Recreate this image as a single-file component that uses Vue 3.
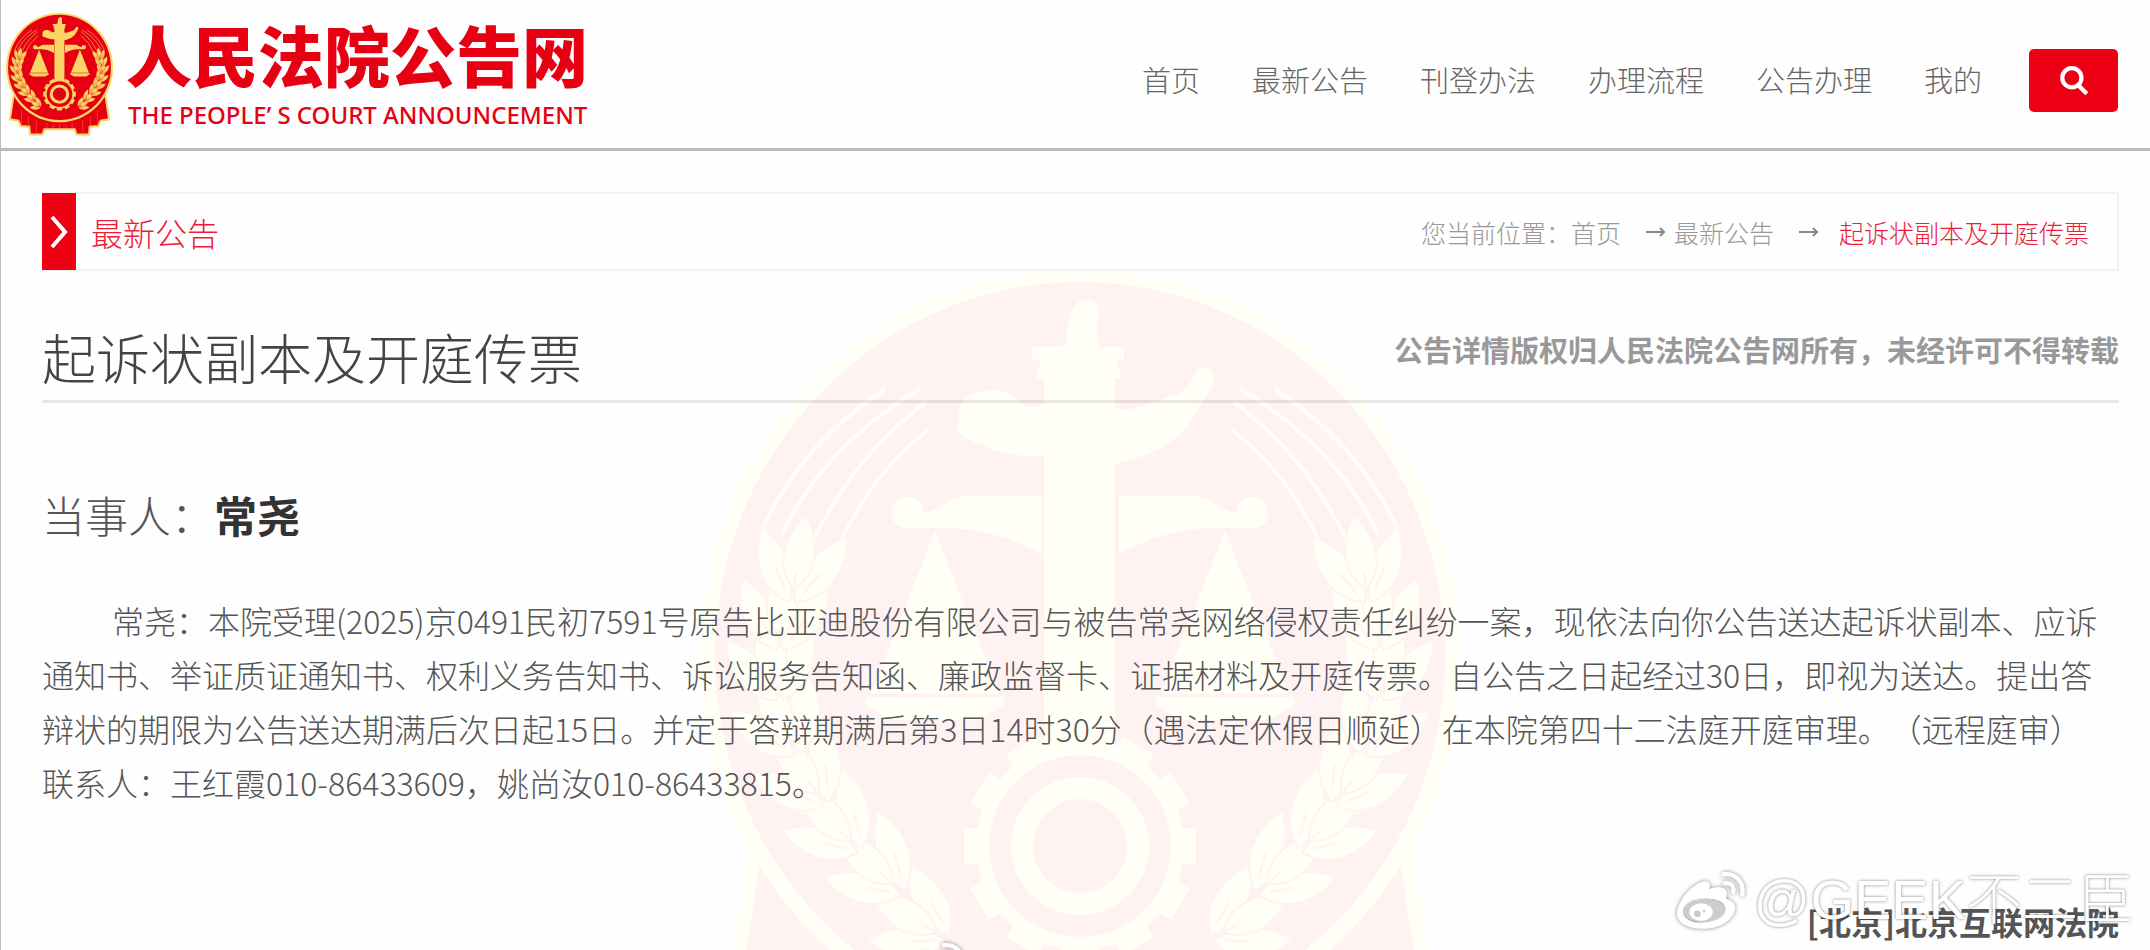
<script setup>
const navItems = ['首页', '最新公告', '刊登办法', '办理流程', '公告办理', '我的']

const teeth = Array.from({ length: 12 }, (_, i) => i * 30)

const rays = [
  'M62 260 Q100 175 185 119',
  'M82 264 Q125 175 220 119',
  'M112 274 Q150 190 226 132',
  'M138 278 Q170 205 228 160'
]

/* stem nodes of the wheat ear: x, y, direction of growth in degrees */
const nodes = [
  [248, 668, -62],
  [203, 622, -50],
  [160, 580, -46],
  [126, 534, -38],
  [98, 484, -28],
  [80, 430, -12],
  [80, 380, 2],
  [92, 332, 8]
]
</script>

<template>
  <div class="page" lang="zh-CN">
    <svg class="defs" aria-hidden="true">
      <symbol id="emblem" viewBox="0 0 760 873">
        <path class="red edge" d="M53 590 L28 755 L88 765 L104 802 L166 807 L170 862 L260 862 L272 826 L488 826 L500 862 L590 862 L594 807 L656 802 L672 765 L732 755 L707 590 Z" />
        <path class="fold" d="M110 690 V790 M160 730 V800 M215 760 V850 M290 780 V820 M335 790 V822 M380 790 V822 M425 790 V822 M470 780 V820 M545 760 V850 M600 730 V800 M650 690 V790" />
        <ellipse class="gold" cx="380" cy="388" rx="380" ry="388" />
        <ellipse class="red" cx="380" cy="386" rx="365" ry="374" />
        <g v-for="side in 2" :key="side" :transform="side === 2 ? 'translate(760 0) scale(-1 1)' : undefined">
          <path v-for="d in rays" :key="d" class="ray" :d="d" />
          <g v-for="(n, i) in nodes" :key="i" :transform="`translate(${n[0]} ${n[1]}) rotate(${n[2]})`">
            <path class="leaf" d="M-3 0 C-36 -8 -46 -42 -40 -70 C-14 -56 2 -30 -3 0 Z" />
            <path class="leaf" d="M3 0 C38 -8 50 -42 46 -72 C18 -58 -4 -32 3 0 Z" />
            <path class="leaf" d="M0 -12 C-22 -34 -18 -62 2 -88 C20 -62 22 -34 0 -12 Z" />
            <path class="vein" d="M0 -2 V-30 M-8 -10 L-20 -30 M10 -10 L24 -32" />
          </g>
          <path class="gold" d="M341 226 H269 C250 226 244 238 224 243 C222 222 192 222 192 242 C192 254 198 258 210 258 H249 Q300 260 341 284 Z" />
          <path class="gold" d="M235 261 L299 424 H171 Z" />
          <path class="gold" d="M166 427 H304 V436 C290 440 288 450 270 450 H200 C182 450 180 440 166 436 Z" />
        </g>
        <path class="gold" d="M366 76 C366 50 374 30 384 30 C394 28 400 34 398 46 C396 56 398 66 398 77 H424 V90 H418 V98 H420 V108 H415 V138 C432 144 450 132 478 124 C494 118 490 102 502 98 C514 98 518 108 510 120 C500 134 496 146 484 160 C466 180 444 186 415 194 V490 H344 V186 C320 186 296 184 282 174 C262 170 252 158 260 150 C256 132 268 122 282 122 C298 116 312 124 326 136 C334 136 340 136 344 134 V108 H337 V98 H340 V90 H332 V77 Z" />
        <g transform="translate(380 576)">
          <rect v-for="a in teeth" :key="a" class="gold" x="-18" y="-116" width="36" height="24" :transform="`rotate(${a})`" />
          <circle class="gold" r="104" />
          <circle class="red" r="91" />
          <circle class="gold" r="69" />
          <circle class="red" r="47" />
        </g>
      </symbol>
      <symbol id="weibo" viewBox="105 52 230 190">
        <path fill="#fff" fill-rule="evenodd" d="M117 188 C117 158 150 108 190 93 C210 87 220 98 213 115 C235 105 264 108 266 125 C267 133 262 138 263 143 C285 150 293 160 291 173 C285 210 240 233 195 233 C150 233 117 215 117 188 Z M135 184 C138 205 165 216 194 214 C230 212 262 194 261 172 C260 152 234 142 204 143 C165 144 133 162 135 184 Z" />
        <ellipse cx="198" cy="178" rx="64" ry="36" fill="#d9d9d9" fill-opacity="0.75" />
        <ellipse cx="189" cy="183" rx="35" ry="26" fill="#fff" />
        <circle cx="178" cy="188" r="10" fill="#c8c8c8" />
        <circle cx="198" cy="180" r="4" fill="#c8c8c8" />
        <path d="M256 70 C292 66 318 92 312 130 M260 97 C280 96 288 106 285 123" fill="none" stroke="#fff" stroke-width="13" stroke-linecap="round" />
      </symbol>
    </svg>

    <header class="header">
      <a class="logo" href="#">
        <svg class="logo-mark" aria-hidden="true"><use href="#emblem" /></svg>
        <span class="logo-text">
          <span class="logo-cn">人民法院公告网</span>
          <span class="logo-en">THE PEOPLE’ S COURT ANNOUNCEMENT</span>
        </span>
      </a>
      <nav class="nav">
        <a v-for="item in navItems" :key="item" href="#">{{ item }}</a>
      </nav>
      <button class="search" type="button" aria-label="搜索">
        <svg viewBox="0 0 30 30" aria-hidden="true">
          <circle cx="13" cy="12" r="9" />
          <path d="M19 19 L27 27" />
        </svg>
      </button>
    </header>

    <main class="main">
      <svg class="seal" aria-hidden="true"><use href="#emblem" /></svg>

      <div class="bar">
        <span class="bar-mark">
          <svg viewBox="0 0 20 36" aria-hidden="true"><path d="M3 3 L16 18 L3 33" /></svg>
        </span>
        <h2>最新公告</h2>
        <div class="crumbs">
          <span>您当前位置：</span>
          <a href="#">首页</a>
          <svg class="arrow first" viewBox="0 0 20 12" aria-hidden="true"><path d="M0 6 H18 M14 2 L18 6 L14 10" /></svg>
          <a href="#">最新公告</a>
          <svg class="arrow second" viewBox="0 0 20 12" aria-hidden="true"><path d="M0 6 H18 M14 2 L18 6 L14 10" /></svg>
          <a class="current" href="#">起诉状副本及开庭传票</a>
        </div>
      </div>

      <div class="heading">
        <h1>起诉状副本及开庭传票</h1>
        <strong>公告详情版权归人民法院公告网所有，未经许可不得转载</strong>
      </div>

      <p class="party">当事人：<b>常尧</b></p>

      <div class="content">
        <p class="lead">常尧：本院受理(2025)京0491民初7591号原告比亚迪股份有限公司与被告常尧网络侵权责任纠纷一案，现依法向你公告送达起诉状副本、应诉通知书、举证质证通知书、权利义务告知书、诉讼服务告知函、廉政监督卡、证据材料及开庭传票。自公告之日起经过30日，即视为送达。提出答辩状的期限为公告送达期满后次日起15日。并定于答辩期满后第3日14时30分（遇法定休假日顺延）在本院第四十二法庭开庭审理。（远程庭审）</p>
        <p>联系人：王红霞010-86433609，姚尚汝010-86433815。</p>
      </div>

      <p class="court">[北京]北京互联网法院</p>
    </main>

    <div class="mark">
      <svg aria-hidden="true"><use href="#weibo" /></svg>
      <span>@GEEK不二臣</span>
    </div>
    <svg class="mark-cut" aria-hidden="true"><use href="#weibo" /></svg>
  </div>
</template>

<style>
body {
  margin: 0;
  background: #fefefe;
}
</style>

<style scoped>
.page {
  --red: #e60012;
  --gold: #fbd667;
  position: relative;
  box-sizing: border-box;
  min-height: 100vh;
  overflow: hidden;
  border-left: 1px solid #bbb;
  color: #555;
  font-family: "Noto Sans CJK SC", "Noto Sans", sans-serif;
  font-weight: 300;
  text-spacing-trim: space-all;
}
.defs {
  position: absolute;
  width: 0;
  height: 0;
}
h1, h2, p {
  margin: 0;
  font-weight: 300;
}
a {
  color: inherit;
  text-decoration: none;
}

.red { fill: var(--red); }
.gold { fill: var(--gold); }
.edge { stroke: var(--gold); stroke-width: 14px; }
.fold { fill: none; stroke: var(--gold); stroke-width: 4px; opacity: 0.5; }
.ray { fill: none; stroke: var(--gold); stroke-width: 4px; }
.leaf { fill: var(--gold); stroke: var(--red); stroke-width: 2px; }
.vein { fill: none; stroke: var(--red); stroke-width: 2px; }

.header {
  display: flex;
  align-items: center;
  box-sizing: border-box;
  height: 151px;
  padding: 0 32px 0 5px;
  border-bottom: 3px solid #bbb;
}
.logo {
  display: flex;
  align-items: center;
  gap: 13px;
  color: var(--red);
}
.logo-mark {
  width: 107px;
  height: 123px;
}
.logo-text {
  display: flex;
  flex-direction: column;
  gap: 12px;
  padding-top: 6px;
}
.logo-cn {
  font-size: 66px;
  font-weight: 900;
  line-height: 64px;
}
.logo-en {
  padding-left: 2px;
  font-family: "Noto Sans", sans-serif;
  font-size: 24px;
  font-weight: 500;
  line-height: 36px;
  white-space: nowrap;
}
.nav {
  display: flex;
  gap: 52px;
  margin-top: 10px;
  margin-left: auto;
  margin-right: 47px;
  font-size: 29px;
  line-height: 44px;
  color: #666;
  white-space: nowrap;
}
.search {
  display: flex;
  align-items: center;
  justify-content: center;
  width: 89px;
  height: 63px;
  margin-top: 13px;
  padding: 0;
  border: 0;
  border-radius: 5px;
  background: #ed0014;
}
.search svg {
  width: 32px;
  height: 32px;
  fill: none;
  stroke: #fff;
  stroke-width: 4px;
}

.main {
  position: relative;
  padding: 41px 31px 0 41px;
}
.seal {
  --red: #fff2f3;
  --gold: #fffff5;
  position: absolute;
  z-index: -1;
  top: 119px;
  left: 50%;
  width: 760px;
  height: 873px;
  margin-left: -376px;
}

.bar {
  display: flex;
  align-items: center;
  box-sizing: border-box;
  height: 79px;
  padding-right: 28px;
  border: 2px solid #f2f2f2;
  border-left: 0;
}
.bar-mark {
  display: flex;
  align-items: center;
  justify-content: center;
  width: 34px;
  height: 77px;
  background: #ed0014;
}
.bar-mark svg {
  width: 20px;
  height: 36px;
  fill: none;
  stroke: #fff;
  stroke-width: 4px;
}
.bar h2 {
  margin-left: 15px;
  font-size: 32px;
  line-height: 48px;
  color: #ed1c3a;
}
.crumbs {
  display: flex;
  align-items: center;
  margin-left: auto;
  font-size: 25px;
  line-height: 40px;
  color: #999;
  white-space: nowrap;
}
.crumbs .current {
  color: #ed1c3a;
}
.arrow {
  width: 20px;
  height: 12px;
  margin: 0 8px 0 25px;
  fill: none;
  stroke: #888;
  stroke-width: 2px;
}
.arrow.second {
  margin-right: 20px;
}

.heading {
  display: flex;
  align-items: flex-start;
  justify-content: space-between;
  padding: 56px 0 13px;
  border-bottom: 3px solid rgb(0 0 0 / 9%);
}
.heading h1 {
  font-size: 54px;
  line-height: 60px;
  color: #444;
}
.heading strong {
  font-size: 29px;
  font-weight: 700;
  line-height: 44px;
  color: #999;
}

.party {
  margin-top: 81px;
  font-size: 43px;
  line-height: 60px;
}
.party b {
  font-weight: 700;
  color: #333;
}
.content {
  margin-top: 49px;
  font-size: 32px;
  line-height: 54px;
}
.lead {
  text-indent: 70px;
}
.court {
  margin-top: 88px;
  font-size: 32px;
  font-weight: 700;
  line-height: 48px;
  text-align: right;
}

.mark {
  position: absolute;
  right: 16px;
  bottom: 16px;
  display: flex;
  align-items: center;
  gap: 4px;
  color: #fff;
  font-family: "Liberation Sans", "Noto Sans CJK SC", sans-serif;
  font-size: 56px;
  font-weight: 300;
  line-height: 68px;
  text-shadow: 0 0 3px rgb(0 0 0 / 50%);
}
.mark svg,
.mark-cut {
  width: 77px;
  height: 64px;
  filter: drop-shadow(0 0 2px rgb(0 0 0 / 45%));
}
.mark-cut {
  position: absolute;
  left: 892px;
  bottom: -53px;
}
</style>
